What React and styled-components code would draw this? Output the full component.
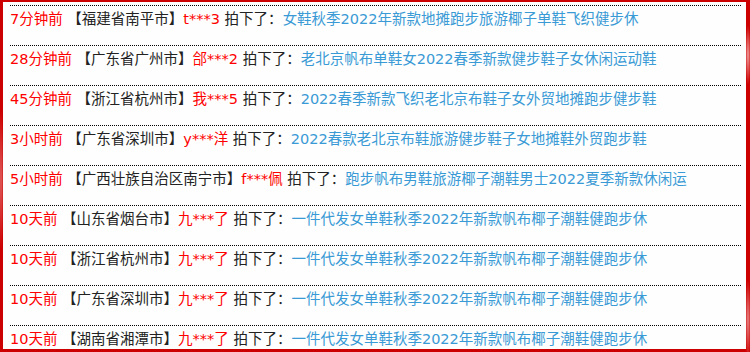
import React from "react";
import styled, { createGlobalStyle } from "styled-components";

const Global = createGlobalStyle`
  html, body { margin: 0; padding: 0; background: #fff; }
  body { width: 750px; height: 352px; overflow: hidden; }
`;

const Frame = styled.div`
  width: 750px;
  height: 352px;
  box-sizing: border-box;
  padding: 2px 4px 3px 3px;
  background:
    radial-gradient(ellipse 3px 30px at 748px 55px, #f0a0a0, transparent),
    radial-gradient(ellipse 3px 40px at 748px 320px, #e88888, transparent),
    radial-gradient(ellipse 3px 70px at 1px 180px, #e06060, transparent),
    #cc0000;
`;

const Panel = styled.div`
  height: 100%;
  background: #fdfefd;
  overflow: hidden;
  padding: 3px 5px 0 7px;
  box-sizing: border-box;
`;

const List = styled.ul`
  list-style: none;
  margin: 0;
  padding: 0;
`;

const Row = styled.li`
  height: 40px;
  box-sizing: border-box;
  border-top: 1px dotted #000;
`;

const Line = styled.div`
  white-space: nowrap;
  overflow: hidden;
  font-family: "DejaVu Sans", "Noto Sans CJK SC", sans-serif;
  font-size: 14.5px;
  line-height: 26px;
  color: #222;
`;

const Time = styled.span`
  color: #f00;
`;

const Place = styled.span`
  color: #222;
`;

const User = styled.span`
  color: #f00;
`;

const Product = styled.a`
  color: #3a9ad6;
  text-decoration: none;
`;

const orders = [
  ["7分钟前", "福建省南平市", "t***3", "女鞋秋季2022年新款地摊跑步旅游椰子单鞋飞织健步休"],
  ["28分钟前", "广东省广州市", "郃***2", "老北京帆布单鞋女2022春季新款健步鞋子女休闲运动鞋"],
  ["45分钟前", "浙江省杭州市", "我***5", "2022春季新款飞织老北京布鞋子女外贸地摊跑步健步鞋"],
  ["3小时前", "广东省深圳市", "y***洋", "2022春款老北京布鞋旅游健步鞋子女地摊鞋外贸跑步鞋"],
  ["5小时前", "广西壮族自治区南宁市", "f***佩", "跑步帆布男鞋旅游椰子潮鞋男士2022夏季新款休闲运"],
  ["10天前", "山东省烟台市", "九***了", "一件代发女单鞋秋季2022年新款帆布椰子潮鞋健跑步休"],
  ["10天前", "浙江省杭州市", "九***了", "一件代发女单鞋秋季2022年新款帆布椰子潮鞋健跑步休"],
  ["10天前", "广东省深圳市", "九***了", "一件代发女单鞋秋季2022年新款帆布椰子潮鞋健跑步休"],
  ["10天前", "湖南省湘潭市", "九***了", "一件代发女单鞋秋季2022年新款帆布椰子潮鞋健跑步休"],
];

export default function App() {
  return (
    <>
      <Global />
      <Frame>
        <Panel>
          <List>
            {orders.map(([t, p, u, prod], i) => (
              <Row key={i}>
                <Line>
                  <Time>{t}</Time> <Place>【{p}】</Place>
                  <User>{u}</User> 拍下了：<Product href="#">{prod}</Product>
                </Line>
              </Row>
            ))}
          </List>
        </Panel>
      </Frame>
    </>
  );
}
